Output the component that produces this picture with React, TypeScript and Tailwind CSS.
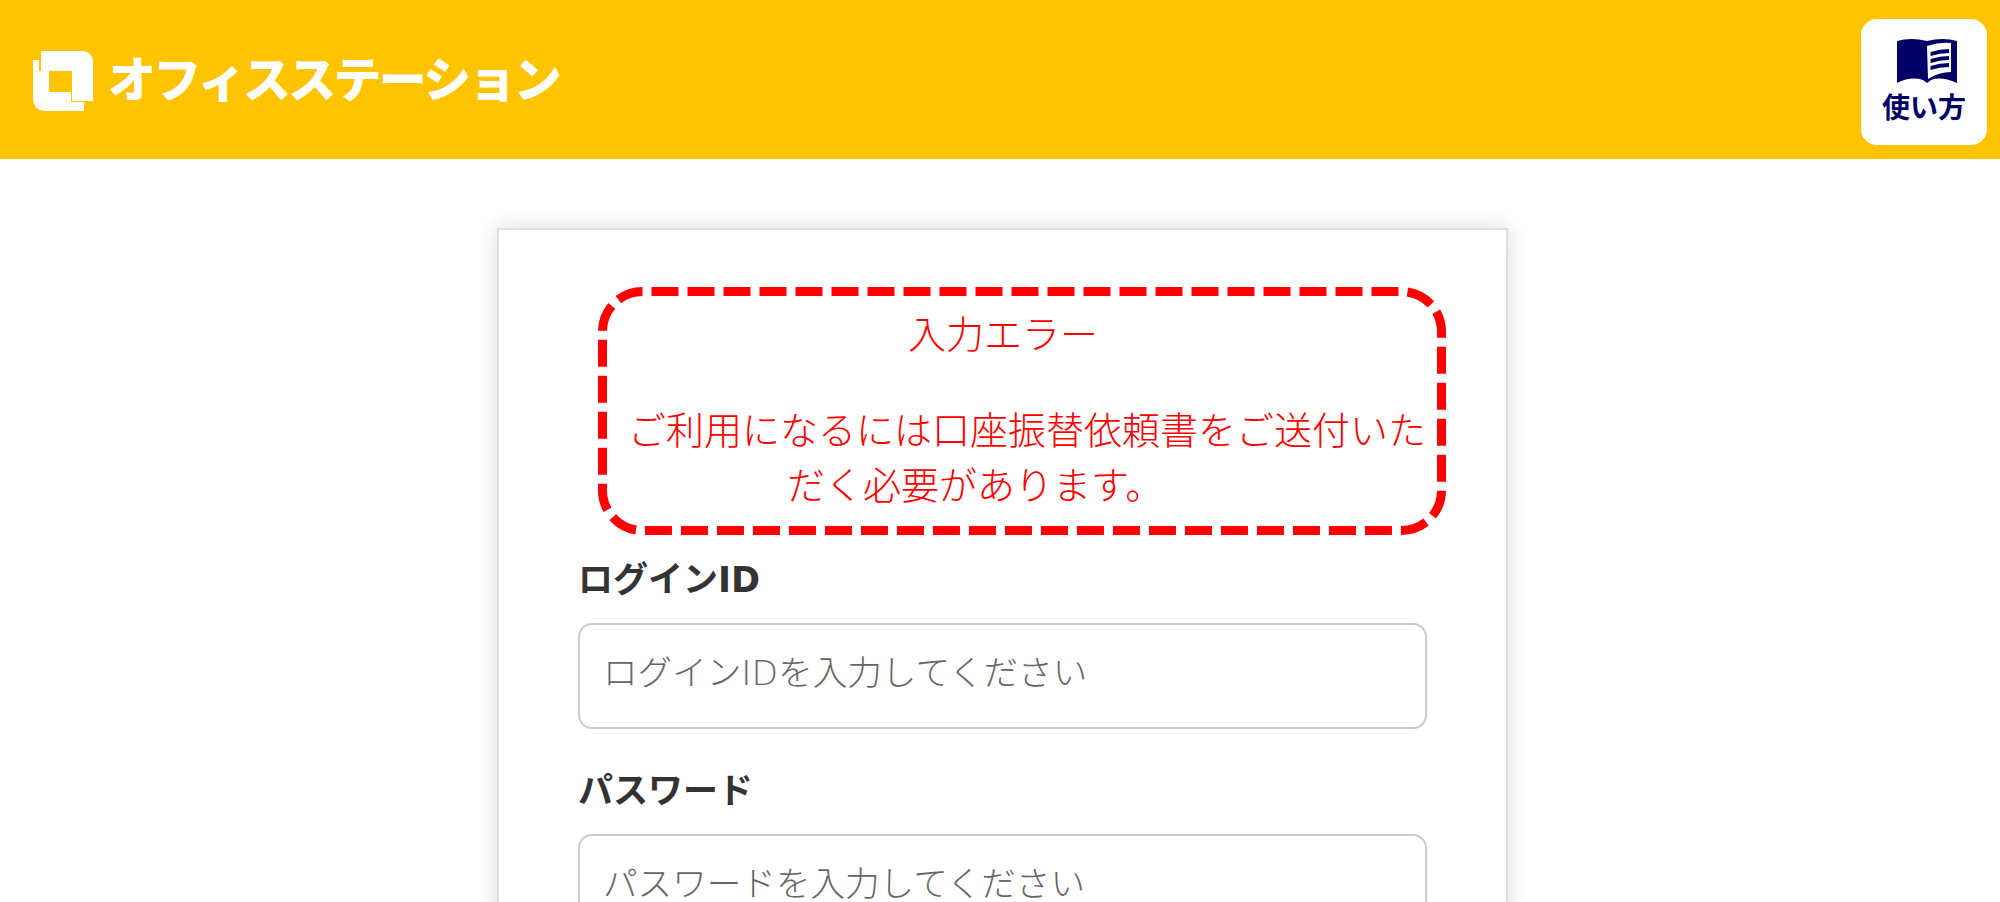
const jp = "font-['DejaVu_Sans','Noto_Sans_CJK_JP',sans-serif]";

function Logo() {
  return (
    <div className="flex items-center">
      <svg width="62" height="62" viewBox="30 51 62 62" className="mt-[2px] mr-[15px]">
        <path d="M40 52H80Q92 52 92 64V102H71V72H40Z" fill="#fff" />
        <path d="M32 61H38V72H48V93H70V103H83V112H45Q32 112 32 98Z" fill="#fff" />
      </svg>
      <span className="pb-[8px] text-[48px] leading-none font-black text-white tracking-[-2.7px] font-['Noto_Sans_CJK_JP',sans-serif]">
        オフィスステーション
      </span>
    </div>
  );
}

function BookIcon() {
  return (
    <svg width="60" height="45" viewBox="0 0 60 45" className="ml-[5px]">
      <path d="M0 3Q14-1 30 3Q46-1 60 3V45Q44 38 34 42L30 45L26 42Q14 38 0 45Z" fill="#000066" />
      <path d="M30 8Q42 4 54 5V34Q42 34 31 41Z" fill="#fff" />
      <path
        d="M33.5 14Q43 11 52 11V15Q43 15 33.5 18ZM33.5 21Q43 18 52 18V22Q43 22 33.5 25ZM33.5 28Q43 25 52 25V29Q43 29 33.5 32Z"
        fill="#000066"
      />
    </svg>
  );
}

function HelpButton() {
  return (
    <button className="mt-[19px] flex h-[126px] w-[126px] flex-col items-center self-start rounded-[16px] bg-white pt-[19px]">
      <BookIcon />
      <span className="mt-[5px] text-[28px] leading-[36px] font-bold text-[#000066] font-['Noto_Sans_CJK_JP',sans-serif]">
        使い方
      </span>
    </button>
  );
}

function Field({ label, placeholder, type }: { label: string; placeholder: string; type: string }) {
  return (
    <div className="mb-[42px]">
      <label className="mb-[23px] block text-[35px] leading-[40px] font-bold text-[#333]">{label}</label>
      <input
        type={type}
        placeholder={placeholder}
        className="block h-[106px] w-[849px] rounded-[14px] border-2 border-[#ccc] px-[23px] pb-[6px] text-[34.6px] font-light outline-none placeholder:text-[#666]"
      />
    </div>
  );
}

export default function App() {
  return (
    <div className={`h-[902px] overflow-hidden bg-white ${jp}`}>
      <header className="flex h-[159px] justify-between bg-[#ffc300] pr-[13px] pl-[31px]">
        <div className="flex items-center">
          <Logo />
        </div>
        <HelpButton />
      </header>
      <main className="pt-[69px] pl-[497px]">
        <div className="w-[1011px] border-2 border-[#e0e0e0] px-[79px] pt-[57px] shadow-[0_0_20px_rgba(0,0,0,0.15)]">
          <div className="relative mb-[25px] ml-[20px] h-[248px] w-[848px] text-[38px] leading-[55px] font-light text-[#ff0000]">
            <svg width="848" height="248" className="absolute inset-0">
              <rect
                x="4.5"
                y="4.5"
                width="839"
                height="239"
                rx="40"
                fill="none"
                stroke="#ff0000"
                strokeWidth="9"
                strokeDasharray="27 9"
                strokeDashoffset="27"
              />
            </svg>
            <p className="pt-[21px] pl-[310px]">入力エラー</p>
            <p className="mt-[41px] pl-[30px] whitespace-nowrap">ご利用になるには口座振替依頼書をご送付いた</p>
            <p className="pl-[189px]">だく必要があります。</p>
          </div>
          <Field label="ログインID" placeholder="ログインIDを入力してください" type="text" />
          <Field label="パスワード" placeholder="パスワードを入力してください" type="password" />
        </div>
      </main>
    </div>
  );
}
